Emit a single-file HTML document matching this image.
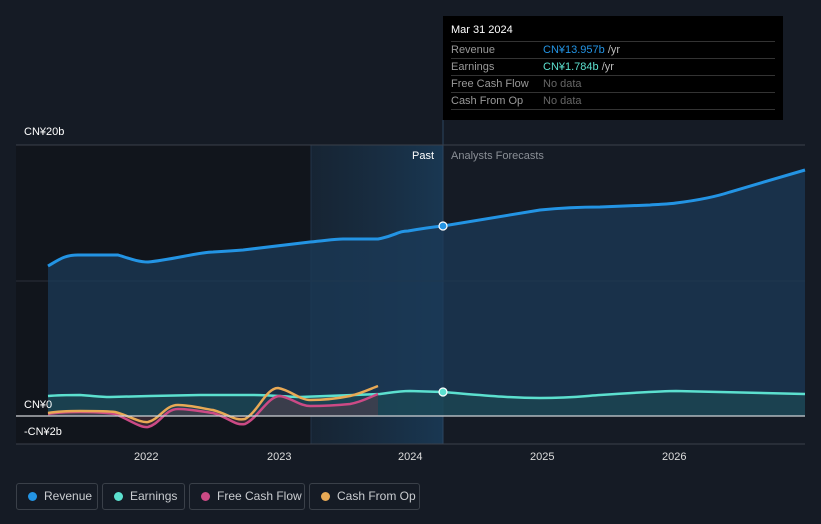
<!DOCTYPE html>
<html><head><meta charset="utf-8"><style>
html,body{margin:0;width:821px;height:524px;overflow:hidden}
body{background:#151b25;font-family:"Liberation Sans",sans-serif;position:relative}
.t{position:absolute;font-size:11px;color:#fff;white-space:nowrap}
.leg{position:absolute;top:483px;height:27px;border:1px solid #3a4049;border-radius:3px;box-sizing:border-box;color:#c9ccd0;font-size:12px;line-height:25px;padding-left:27px;white-space:nowrap}
.leg i{position:absolute;left:11px;top:8px;width:9px;height:9px;border-radius:50%}
.tip{position:absolute;left:443px;top:16px;width:340px;height:104px;background:#000;font-size:11px}
.row{position:absolute;left:8px;right:8px;height:17px;border-top:1px solid #333;color:#999;line-height:17px}
.row span{position:absolute;left:92px}
</style></head><body>
<svg width="821" height="524" style="position:absolute;left:0;top:0">
<defs><linearGradient id="hl" x1="0" x2="1"><stop offset="0" stop-color="#1a3a55" stop-opacity="0.3"/><stop offset="1" stop-color="#1c4a70" stop-opacity="0.6"/></linearGradient></defs>
<rect x="16" y="145" width="295" height="299" fill="#11151c"/>
<rect x="311" y="145" width="132" height="299" fill="url(#hl)"/>
<line x1="311" y1="145" x2="311" y2="444" stroke="#223349"/>
<line x1="443" y1="120" x2="443" y2="444" stroke="#2a4560"/>
<line x1="16" y1="145" x2="805" y2="145" stroke="#3a404a"/>
<line x1="16" y1="281" x2="805" y2="281" stroke="#2a303a"/>
<line x1="16" y1="444" x2="805" y2="444" stroke="#3a404a"/>
<path d="M48,266 C60,259 65,255 78,255 L118,255 C128,258 138,262 148,262 C170,260 200,252 213,252 C230,251 243,250 243,250 L310,242 C330,240 335,239 343,239 L378,239 C395,236 398,231 408,231 C425,228 433,227 443,226 L540,210 C560,208 580,207 600,207 L650,205 C665,204 670,204 676,203 C700,200 715,197 730,192 L805,170 L805,416 L48,416 Z" fill="#1b3a57" fill-opacity="0.75"/>
<path d="M48,266 C60,259 65,255 78,255 L118,255 C128,258 138,262 148,262 C170,260 200,252 213,252 C230,251 243,250 243,250 L310,242 C330,240 335,239 343,239 L378,239 C395,236 398,231 408,231 C425,228 433,227 443,226 L540,210 C560,208 580,207 600,207 L650,205 C665,204 670,204 676,203 C700,200 715,197 730,192 L805,170" fill="none" stroke="#2394e4" stroke-width="3"/>
<path d="M48,396 C60,395 70,395 80,395 C95,396 100,397 110,397 L150,396 L200,395 L250,395 C270,395 290,397 300,397 L380,394 C395,392 400,391 410,391 L443,392 C480,395 510,398 540,398 C570,398 585,396 600,395 C630,393 660,391 676,391 L805,394 L805,416 L48,416 Z" fill="#1f5a5a" fill-opacity="0.4"/>
<path d="M48,396 C60,395 70,395 80,395 C95,396 100,397 110,397 L150,396 L200,395 L250,395 C270,395 290,397 300,397 L380,394 C395,392 400,391 410,391 L443,392 C480,395 510,398 540,398 C570,398 585,396 600,395 C630,393 660,391 676,391 L805,394" fill="none" stroke="#5ce0cf" stroke-width="2.5"/>
<path d="M48,414 C60,412 70,412 80,412 C100,412 108,413 115,414 C130,420 140,428 148,427 C160,424 165,409 178,409 C190,409 205,412 213,413 C230,418 235,426 245,424 C258,418 268,396 280,396 C292,398 300,406 310,406 C325,406 340,405 350,404 C362,402 370,397 378,394 L378,416 L48,416 Z" fill="#5a3a48" fill-opacity="0.5"/>
<path d="M48,414 C60,412 70,412 80,412 C100,412 108,413 115,414 C130,420 140,428 148,427 C160,424 165,409 178,409 C190,409 205,412 213,413 C230,418 235,426 245,424 C258,418 268,396 280,396 C292,398 300,406 310,406 C325,406 340,405 350,404 C362,402 370,397 378,394" fill="none" stroke="#cc4a85" stroke-width="2.5"/>
<path d="M48,413 C60,411 70,411 80,411 C100,411 108,411 115,412 C130,416 140,423 148,422 C160,419 165,405 178,405 C190,405 205,409 213,410 C230,415 235,421 245,419 C258,412 266,388 278,388 C290,390 300,400 310,400 C325,400 340,398 350,396 C362,393 370,389 378,386" fill="none" stroke="#e8a955" stroke-width="2.5"/>
<line x1="16" y1="416" x2="805" y2="416" stroke="#cfd2d6" stroke-width="1.3"/>
<circle cx="443" cy="226" r="4" fill="#2394e4" stroke="#fff" stroke-width="1.2"/>
<circle cx="443" cy="392" r="4" fill="#5ce0cf" stroke="#fff" stroke-width="1.2"/>
</svg>
<div class="t" style="left:24px;top:126px">CN¥20b</div>
<div class="t" style="left:24px;top:399px">CN¥0</div>
<div class="t" style="left:24px;top:426px">-CN¥2b</div>
<div class="t" style="left:412px;top:150px">Past</div>
<div class="t" style="left:451px;top:150px;color:#8a8f96">Analysts Forecasts</div>
<div class="t" style="left:134px;top:451px;color:#ddd">2022</div>
<div class="t" style="left:267px;top:451px;color:#ddd">2023</div>
<div class="t" style="left:398px;top:451px;color:#ddd">2024</div>
<div class="t" style="left:530px;top:451px;color:#ddd">2025</div>
<div class="t" style="left:662px;top:451px;color:#ddd">2026</div>
<div class="tip">
<div style="position:absolute;left:8px;top:8px;color:#fff">Mar 31 2024</div>
<div class="row" style="top:25px">Revenue<span><b style="font-weight:normal;color:#2394e4">CN¥13.957b</b> <b style="font-weight:normal;color:#bbb">/yr</b></span></div>
<div class="row" style="top:42px">Earnings<span><b style="font-weight:normal;color:#5ce0cf">CN¥1.784b</b> <b style="font-weight:normal;color:#bbb">/yr</b></span></div>
<div class="row" style="top:59px">Free Cash Flow<span style="color:#666">No data</span></div>
<div class="row" style="top:76px">Cash From Op<span style="color:#666">No data</span></div>
<div class="row" style="top:93px;height:0"></div>
</div>
<div class="leg" style="left:16px;width:82px"><i style="background:#2394e4"></i>Revenue</div>
<div class="leg" style="left:102px;width:83px"><i style="background:#5ce0cf"></i>Earnings</div>
<div class="leg" style="left:189px;width:116px"><i style="background:#cc4a85"></i>Free Cash Flow</div>
<div class="leg" style="left:309px;width:111px"><i style="background:#e8a955"></i>Cash From Op</div>
</body></html>
